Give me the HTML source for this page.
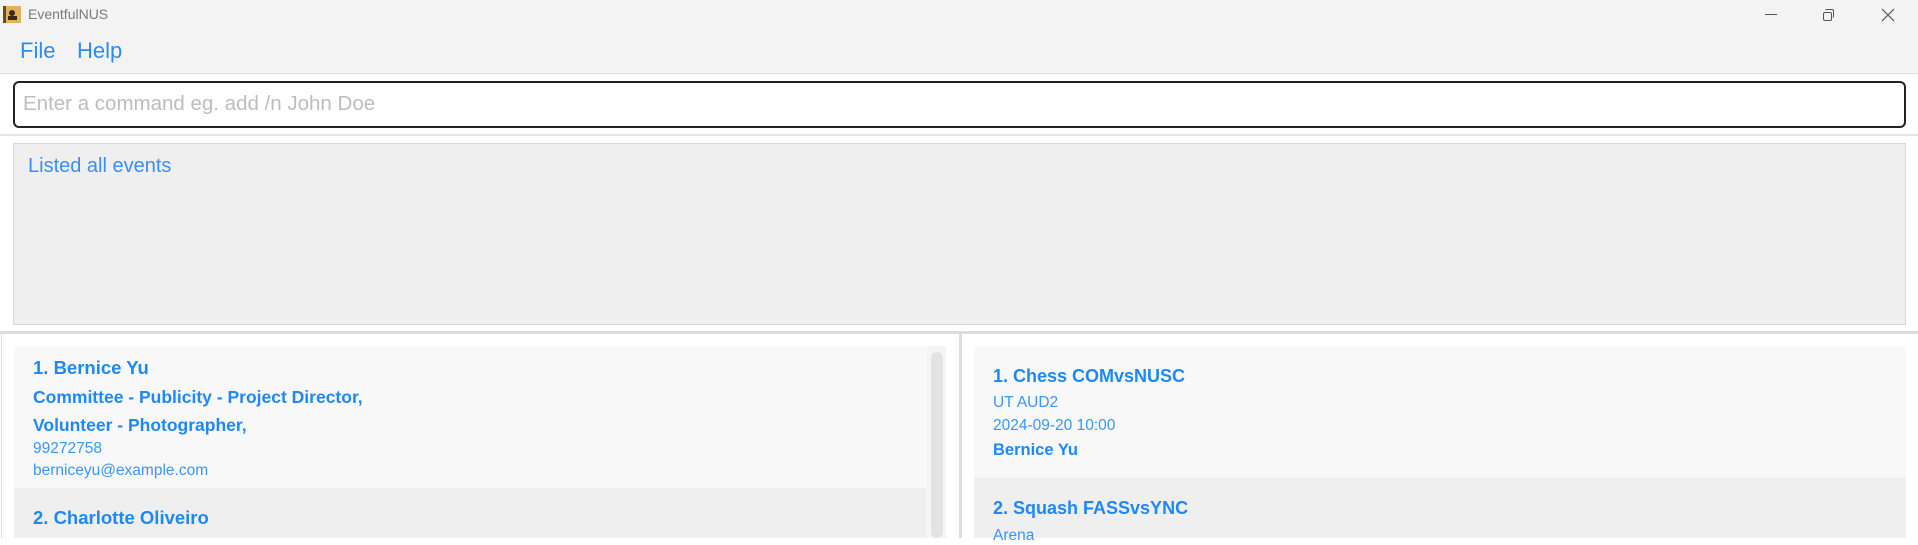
<!DOCTYPE html>
<html><head><meta charset="utf-8"><style>
*{margin:0;padding:0;box-sizing:border-box}
body{width:1918px;height:538px;overflow:hidden;background:#fff;font-family:"Liberation Sans",sans-serif;position:relative}
.a{position:absolute;white-space:nowrap}
.b{color:#1e88f5;font-weight:bold}
.s{color:#3a95f5;font-size:15.5px}
</style></head><body>
<div class="a" style="left:0;top:0;width:1918px;height:73px;background:#f3f3f3"></div>
<div class="a" style="left:3px;top:6px;width:18px;height:17px;background:#e2b25a;border-left:3px solid #6b4a1e"></div>
<div class="a" style="left:9px;top:10px;width:6px;height:6px;border-radius:50%;background:#3a2a12"></div>
<div class="a" style="left:8px;top:16px;width:9px;height:4px;background:#3a2a12"></div>
<div class="a" style="left:28px;top:6px;font-size:14px;color:#7a7a7a">EventfulNUS</div>
<div class="a" style="left:1765px;top:14px;width:12px;height:1px;background:#555"></div>
<div class="a" style="left:1823px;top:12px;width:9px;height:9px;border:1px solid #555;border-radius:2px"></div>
<div class="a" style="left:1825px;top:9px;width:9px;height:9px;border-top:1px solid #555;border-right:1px solid #555;border-radius:2px"></div>
<svg class="a" style="left:1881px;top:8px" width="14" height="14"><path d="M1 1L13 13M13 1L1 13" stroke="#555" stroke-width="1.2"/></svg>
<div class="a" style="left:20px;top:38px;font-size:22px;color:#2a8cf0">File</div>
<div class="a" style="left:77px;top:38px;font-size:22px;color:#2a8cf0">Help</div>
<div class="a" style="left:0;top:73px;width:1918px;height:1px;background:#ddd"></div>
<div class="a" style="left:13px;top:81px;width:1893px;height:47px;border:2px solid #222;border-radius:6px;background:#fff"></div>
<div class="a" style="left:23px;top:92px;font-size:20.5px;color:#bdbdbd">Enter a command eg. add /n John Doe</div>
<div class="a" style="left:0;top:134px;width:1918px;height:2px;background:#e6e6e6"></div>
<div class="a" style="left:13px;top:143px;width:1893px;height:182px;background:#efefef;border:1px solid #d8d8d8"></div>
<div class="a" style="left:28px;top:155px;font-size:20px;color:#3a8ef5">Listed all events</div>
<div class="a" style="left:0;top:331px;width:1918px;height:3px;background:#ddd"></div>
<div class="a" style="left:1px;top:334px;width:1px;height:204px;background:#ddd"></div>
<div class="a" style="left:959px;top:334px;width:3px;height:204px;background:#ddd"></div>
<div class="a" style="left:14px;top:346px;width:912px;height:142px;background:#f8f8f8"></div>
<div class="a" style="left:14px;top:488px;width:912px;height:50px;background:#efefef"></div>
<div class="a" style="left:926px;top:346px;width:20px;height:192px;background:#f5f5f5"></div>
<div class="a" style="left:931px;top:352px;width:12px;height:186px;background:#e3e3e3;border-radius:6px"></div>
<div class="a b" style="left:33px;top:357px;font-size:18.5px">1. Bernice Yu</div>
<div class="a b" style="left:33px;top:387px;font-size:17.5px">Committee - Publicity - Project Director,</div>
<div class="a b" style="left:33px;top:415px;font-size:17.5px">Volunteer - Photographer,</div>
<div class="a s" style="left:33px;top:440px">99272758</div>
<div class="a s" style="left:33px;top:462px">berniceyu@example.com</div>
<div class="a b" style="left:33px;top:507px;font-size:18.5px">2. Charlotte Oliveiro</div>
<div class="a" style="left:974px;top:346px;width:932px;height:132px;background:#f8f8f8"></div>
<div class="a" style="left:974px;top:478px;width:932px;height:60px;background:#efefef"></div>
<div class="a b" style="left:993px;top:366px;font-size:18px">1. Chess COMvsNUSC</div>
<div class="a s" style="left:993px;top:394px">UT AUD2</div>
<div class="a s" style="left:993px;top:417px">2024-09-20 10:00</div>
<div class="a b" style="left:993px;top:441px;font-size:16.5px">Bernice Yu</div>
<div class="a b" style="left:993px;top:498px;font-size:18px">2. Squash FASSvsYNC</div>
<div class="a s" style="left:993px;top:527px">Arena</div>
</body></html>
